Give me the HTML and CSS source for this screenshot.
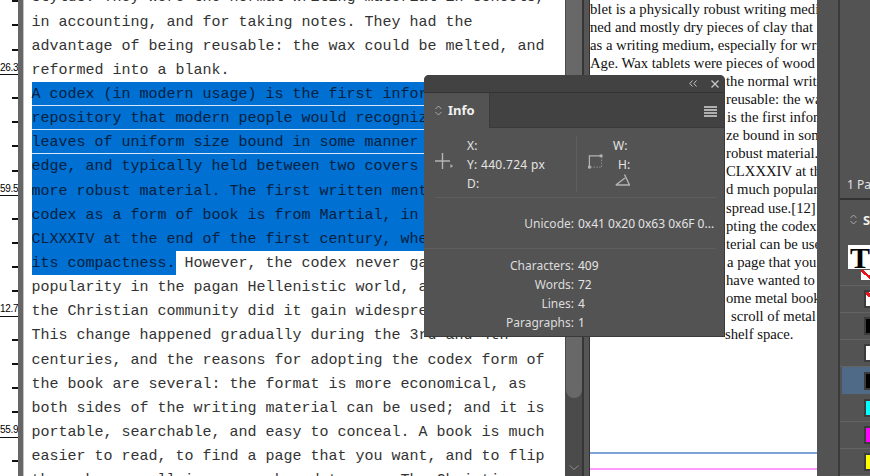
FILE: index.html
```html
<!DOCTYPE html>
<html>
  <head>
    <title>Info</title>
    <link rel="stylesheet" href="styles.css">
  </head>
  <body>
    <div class="ruler">
      <div class="tick"></div>
      <div class="tick"></div>
      <div class="tick"></div>
      <div class="tick major">26.3</div>
      <div class="tick"></div>
      <div class="tick"></div>
      <div class="tick"></div>
      <div class="tick"></div>
      <div class="tick major">59.5</div>
      <div class="tick"></div>
      <div class="tick"></div>
      <div class="tick"></div>
      <div class="tick"></div>
      <div class="tick major">12.7</div>
      <div class="tick"></div>
      <div class="tick"></div>
      <div class="tick"></div>
      <div class="tick"></div>
      <div class="tick major">55.9</div>
      <div class="tick"></div>
    </div>
    <div class="gutter"></div>

    <div class="story">
      <div class="line">stylus. They were the normal writing material in schools,</div>
      <div class="line">in accounting, and for taking notes. They had the</div>
      <div class="line">advantage of being reusable: the wax could be melted, and</div>
      <div class="line">reformed into a blank.</div>
      <div class="line sel rule">A codex (in modern usage) is the first information</div>
      <div class="line sel rule">repository that modern people would recognize as a book:</div>
      <div class="line sel rule">leaves of uniform size bound in some manner along one</div>
      <div class="line sel">edge, and typically held between two covers made of some</div>
      <div class="line sel">more robust material. The first written mention of the</div>
      <div class="line sel">codex as a form of book is from Martial, in his Apophoreta</div>
      <div class="line sel">CLXXXIV at the end of the first century, where he praises</div>
      <div class="line"><span class="sel-end">its compactness.</span> However, the codex never gained much</div>
      <div class="line">popularity in the pagan Hellenistic world, and only within</div>
      <div class="line">the Christian community did it gain widespread use.[12]</div>
      <div class="line">This change happened gradually during the 3rd and 4th</div>
      <div class="line">centuries, and the reasons for adopting the codex form of</div>
      <div class="line">the book are several: the format is more economical, as</div>
      <div class="line">both sides of the writing material can be used; and it is</div>
      <div class="line">portable, searchable, and easy to conceal. A book is much</div>
      <div class="line">easier to read, to find a page that you want, and to flip</div>
      <div class="line">through a scroll is more awkward to use. The Christian</div>
    </div>

    <div class="scrollbar">
      <div class="scroll-track">
        <div class="scroll-thumb"></div>
        <svg class="scroll-down" width="10" height="6" viewBox="0 0 10 6"><path d="M0.5 0.5 L5 4.5 L9.5 0.5" fill="none" stroke="#8a8a8a"/></svg>
      </div>
      <div class="scroll-edge"></div>
    </div>

    <div class="layout">
      <div class="layout-line">blet is a physically robust writing medium</div>
      <div class="layout-line">ned and mostly dry pieces of clay that</div>
      <div class="layout-line">as a writing medium, especially for writing</div>
      <div class="layout-line">Age. Wax tablets were pieces of wood</div>
      <div class="layout-line past">the normal writing</div>
      <div class="layout-line past">reusable: the wax</div>
      <div class="layout-line past far">is the first information</div>
      <div class="layout-line past">ze bound in some</div>
      <div class="layout-line past">robust material.</div>
      <div class="layout-line past">CLXXXIV at the</div>
      <div class="layout-line past">d much popular</div>
      <div class="layout-line past">spread use.[12]</div>
      <div class="layout-line past">pting the codex</div>
      <div class="layout-line past">terial can be used</div>
      <div class="layout-line past far">a page that you</div>
      <div class="layout-line past">have wanted to</div>
      <div class="layout-line past">ome metal book</div>
      <div class="layout-line past farther">scroll of metal</div>
      <div class="layout-line past tuck">shelf space.</div>
      <div class="guide guide-blue"></div>
      <div class="guide guide-pink"></div>
    </div>

    <div class="dock">
      <div class="dock-strip"></div>
      <div class="dock-panels">
        <div class="pages-panel">
          <div class="pages-accent"></div>
          <div class="pages-count">1 Pa</div>
        </div>
        <div class="styles-panel">
          <div class="styles-head">
            <svg width="7" height="11" viewBox="0 0 7 11"><path d="M0.5 4 L3.5 1 L6.5 4 M0.5 7 L3.5 10 L6.5 7" fill="none" stroke="#aaa"/></svg>
            <span>S</span>
          </div>
          <div class="type-box">
            <div class="type-t">T</div>
            <div class="none-chip"></div>
          </div>
          <div class="swatch-row"><div class="swatch none"></div></div>
          <div class="swatch-row"><div class="swatch black"></div></div>
          <div class="swatch-row"><div class="swatch white"></div></div>
          <div class="swatch-row active"><div class="swatch black"></div></div>
          <div class="swatch-row"><div class="swatch cyan"></div></div>
          <div class="swatch-row"><div class="swatch magenta"></div></div>
          <div class="swatch-row"><div class="swatch yellow"></div></div>
        </div>
      </div>
    </div>

    <div class="info-panel">
      <div class="info-title">
        <svg width="8" height="7" viewBox="0 0 8 7"><path d="M3.5 0.5 L0.8 3.5 L3.5 6.5 M7.5 0.5 L4.8 3.5 L7.5 6.5" fill="none" stroke="#c4c4c4"/></svg>
        <svg class="close" width="8" height="8" viewBox="0 0 8 8"><path d="M0.5 0.5 L7.5 7.5 M7.5 0.5 L0.5 7.5" stroke="#c8c8c8" stroke-width="1.3"/></svg>
      </div>
      <div class="info-tabs">
        <div class="info-tab">
          <svg width="7" height="11" viewBox="0 0 7 11"><path d="M0.5 4 L3.5 1 L6.5 4 M0.5 7 L3.5 10 L6.5 7" fill="none" stroke="#aaa"/></svg>
          <span>Info</span>
        </div>
        <div class="menu-icon"><i></i><i></i><i></i><i></i></div>
      </div>
      <div class="info-measures">
        <svg class="cross" width="18" height="18" viewBox="0 0 18 18"><path d="M7.5 0 V16 M0 8 H15" stroke="#b4b4b4" stroke-width="1.4"/><path d="M15.5 11 L18 13 L15.5 15 Z" fill="#b4b4b4"/></svg>
        <div class="coords">
          <div>X:</div>
          <div>Y: 440.724 px</div>
          <div>D:</div>
        </div>
        <div class="measures-split"></div>
        <svg class="box-icon" width="15" height="15" viewBox="0 0 16 15"><path d="M1.5 13 V1.5 H13" fill="none" stroke="#b4b4b4" stroke-width="1.3"/><path d="M3 13.5 H14.5 V3" fill="none" stroke="#999" stroke-dasharray="1.5 1.5"/><rect x="0" y="12" width="3" height="3" fill="#b4b4b4"/><rect x="12.5" y="0" width="3" height="3" fill="#b4b4b4"/></svg>
        <div class="sizes">
          <div>W:</div>
          <div class="size-h">H:</div>
          <svg width="15" height="13" viewBox="0 0 15 13"><path d="M0.8 12 H14.5 L9.5 1.5 M0.8 12 L10 5" fill="none" stroke="#b4b4b4" stroke-width="1.4"/></svg>
        </div>
      </div>
      <div class="info-unicode">
        <span class="info-key">Unicode:</span>
        <span>0x41 0x20 0x63 0x6F 0...</span>
      </div>
      <div class="info-counts">
        <span class="info-key">Characters:</span><span>409</span>
        <span class="info-key">Words:</span><span>72</span>
        <span class="info-key">Lines:</span><span>4</span>
        <span class="info-key">Paragraphs:</span><span>1</span>
      </div>
    </div>
  </body>
</html>
```

FILE: styles.css
```css
html,
body {
  margin: 0;
  height: 476px;
  overflow: hidden;
}

body {
  display: flex;
  background-color: #fff;
  color: #000;
  font-family: "Noto Sans", sans-serif;
}

/* story editor */
.ruler {
  width: 18px;
  flex: none;
  margin-top: -22px;
  font-family: "Liberation Sans", sans-serif;
  font-size: 10px;
}

.tick {
  box-sizing: border-box;
  height: 24.2px;
  margin-left: 12px;
  border-bottom: 2px solid #111;
}

.tick.major {
  margin-left: 0;
  border-bottom-width: 1px;
  line-height: 33px;
  letter-spacing: -0.3px;
}

.gutter {
  width: 5px;
  flex: none;
  background-color: #666;
  border-right: 1px solid #c4c4c4;
}

.story {
  width: 541px;
  flex: none;
  box-sizing: border-box;
  margin-top: -14.6px;
  padding-left: 7.5px;
  font-family: "Liberation Mono", monospace;
  font-size: 15px;
  color: #333;
}

.line {
  box-sizing: border-box;
  height: 24.15px;
  padding-top: 1px;
  line-height: 24.15px;
  white-space: nowrap;
}

.sel {
  margin-left: 0.5px;
  background-color: #0070d2;
  color: #04213f;
  text-indent: -0.5px;
}

.sel.rule {
  border-bottom: 1px solid #d8e8f6;
}

.sel-end {
  display: inline-block;
  height: 24px;
  margin-top: -1px;
  margin-left: 0.5px;
  background-color: #0070d2;
  color: #04213f;
  vertical-align: top;
  padding-top: 1px;
  box-sizing: border-box;
  text-indent: -0.5px;
}

/* scrollbar between the two views */
.scrollbar {
  display: flex;
  width: 25px;
  flex: none;
}

.scroll-track {
  position: relative;
  width: 19px;
  background-color: #4b4b4b;
  border-right: 2px solid #363636;
  box-sizing: border-box;
}

.scroll-thumb {
  width: 16px;
  height: 398px;
  margin-left: 1px;
  background-color: #686868;
  border-radius: 0 0 8px 8px;
}

.scroll-down {
  position: absolute;
  left: 4px;
  top: 465px;
}

.scroll-edge {
  width: 6px;
  background-color: #555;
  border-right: 1px solid #333;
  box-sizing: border-box;
}

/* layout view */
.layout {
  position: relative;
  width: 227px;
  flex: none;
  overflow: hidden;
  font-family: "Liberation Serif", serif;
  font-size: 14.7px;
  color: #111;
}

.layout-line {
  height: 18.1px;
  line-height: 18.1px;
  white-space: nowrap;
}

.layout-line.past {
  padding-left: 136px;
}

.layout-line.far {
  padding-left: 137px;
}

.layout-line.farther {
  padding-left: 141px;
}

.layout-line.tuck {
  padding-left: 135px;
}

.layout-line:first-child {
  margin-top: -0.5px;
}

.guide {
  position: absolute;
  left: 0;
  right: 0;
  height: 2px;
}

.guide-blue {
  top: 452px;
  background-color: #7ea3d8;
}

.guide-pink {
  top: 468px;
  background-color: #ff99ff;
}

/* right dock */
.dock {
  display: flex;
  flex: 1;
  background-color: #535353;
}

.dock-strip {
  width: 21px;
  flex: none;
  border-right: 2px solid #3a3a3a;
}

.dock-panels {
  flex: 1;
  display: flex;
  flex-direction: column;
}

.pages-panel {
  position: relative;
  height: 200px;
  box-sizing: border-box;
  border-bottom: 2px solid #333;
  color: #e2e2e2;
  font-size: 12px;
}

.pages-accent {
  position: absolute;
  right: 0;
  top: 0;
  width: 3px;
  height: 6px;
  background-color: #3b8be0;
}

.pages-count {
  position: absolute;
  left: 7px;
  top: 176px;
  white-space: nowrap;
}

.styles-head {
  display: flex;
  align-items: center;
  gap: 6px;
  height: 40px;
  padding-left: 10px;
  color: #eee;
  font-size: 13px;
  font-weight: 700;
}

.type-box {
  position: relative;
  height: 46px;
  box-sizing: border-box;
  padding-top: 5px;
  border-bottom: 1px solid #636363;
}

.type-t {
  width: 40px;
  height: 24px;
  margin-left: 8px;
  padding-left: 2px;
  overflow: hidden;
  background-color: #fff;
  color: #000;
  font-family: "Liberation Serif", serif;
  font-size: 30px;
  font-weight: 700;
  line-height: 26px;
}

.none-chip {
  position: absolute;
  left: 21px;
  top: 30px;
  width: 12px;
  height: 10px;
  background: linear-gradient(to top right, #fff 42%, #e8141c 42%, #e8141c 58%, #fff 58%);
}

.swatch-row {
  display: flex;
  align-items: center;
  box-sizing: border-box;
  height: 27.2px;
  padding-left: 24px;
  border-bottom: 1px solid #636363;
}

.swatch-row.active {
  margin-left: 2px;
  padding-left: 22px;
  background-color: #4e6a87;
  border-bottom: 0;
}

.swatch {
  flex: none;
  width: 20px;
  height: 14px;
  border: 2px solid #3b3b3b;
}

.swatch.none {
  background: linear-gradient(to top right, #fff 40%, #e8141c 40%, #e8141c 56%, #fff 56%);
}

.black {
  background-color: #000;
}

.white {
  background-color: #fff;
}

.cyan {
  background-color: #00ffff;
}

.magenta {
  background-color: #ff00ff;
}

.yellow {
  background-color: #ffff00;
}

/* floating Info panel */
.info-panel {
  position: absolute;
  left: 424px;
  top: 75px;
  width: 301px;
  height: 262px;
  box-sizing: border-box;
  background-color: #535353;
  border-radius: 5px 5px 0 0;
  border-right: 1px solid #3a3a3a;
  border-bottom: 1px solid #3a3a3a;
  color: #e4e4e4;
  font-size: 12px;
  line-height: 19px;
}

.info-title {
  display: flex;
  align-items: center;
  justify-content: flex-end;
  gap: 14px;
  height: 17px;
  padding-right: 5px;
  background-color: #424242;
  border-bottom: 1px solid #333;
  border-radius: 5px 5px 0 0;
}

.info-tabs {
  display: flex;
  justify-content: space-between;
  height: 34px;
  background-color: #424242;
  border-bottom: 1px solid #3a3a3a;
}

.info-tab {
  display: flex;
  align-items: center;
  gap: 6px;
  width: 66px;
  height: 35px;
  box-sizing: border-box;
  padding-left: 11px;
  background-color: #535353;
  border-right: 1px solid #3a3a3a;
  color: #f0f0f0;
  font-size: 13px;
  font-weight: 700;
}

.menu-icon {
  display: flex;
  flex-direction: column;
  gap: 1px;
  width: 13px;
  margin: 13px 7px 0 0;
}

.menu-icon i {
  height: 2px;
  background-color: #b0b0b0;
}

.info-measures {
  display: flex;
  height: 70px;
  box-sizing: border-box;
  margin: 0 8px 0 11px;
  padding-top: 8px;
  border-bottom: 1px solid #5e5e5e;
}

.cross {
  margin: 17px 0 0 0;
  flex: none;
}

.coords {
  width: 109px;
  margin-left: 14px;
  letter-spacing: 0.3px;
}

.measures-split {
  width: 1px;
  height: 56px;
  background-color: #5e5e5e;
}

.box-icon {
  flex: none;
  margin: 18px 0 0 11px;
}

.sizes {
  margin-left: 10px;
}

.size-h {
  padding-left: 5px;
}

.sizes svg {
  display: block;
  margin: -1px 0 0 2px;
}

.info-unicode {
  display: grid;
  grid-template-columns: 150px auto;
  column-gap: 4px;
  height: 51px;
  box-sizing: border-box;
  margin: 0 8px 0 0;
  padding-top: 16px;
  border-bottom: 1px solid #5e5e5e;
}

.info-key {
  text-align: right;
  color: #dcdcdc;
}

.info-counts {
  display: grid;
  grid-template-columns: 150px auto;
  column-gap: 4px;
  padding-top: 7px;
}
```
